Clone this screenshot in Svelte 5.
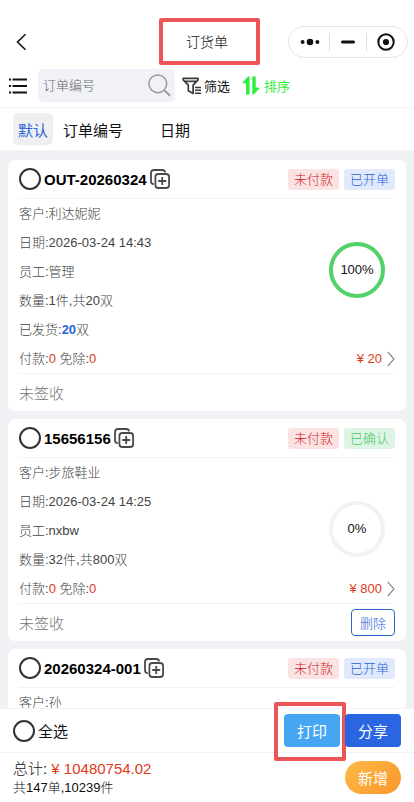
<script>
  const orders = [
    {
      no: 'OUT-20260324',
      status: '已开单',
      tone: 'blue',
      lines: ['客户:利达妮妮', '日期:2026-03-24 14:43', '员工:管理', '数量:1件,共20双'],
      shipped: 20,
      percent: 100,
      price: 20,
      removable: false
    },
    {
      no: '15656156',
      status: '已确认',
      tone: 'green',
      lines: ['客户:步旅鞋业', '日期:2026-03-24 14:25', '员工:nxbw', '数量:32件,共800双'],
      shipped: 0,
      percent: 0,
      price: 800,
      removable: true
    },
    {
      no: '20260324-001',
      status: '已开单',
      tone: 'blue',
      lines: ['客户:孙'],
      shipped: 0,
      percent: null,
      price: null,
      removable: false
    }
  ];
  const tabs = ['默认', '订单编号', '日期'];
  let active = $state('默认');
  let keyword = $state('');
  const ringLength = 2 * Math.PI * 26;
</script>

<div class="app">
  <header class="nav">
    <button class="icon-btn" aria-label="返回">
      <svg width="11" height="18" viewBox="0 0 11 18"><path d="M9.5 1.2 1.5 9l8 7.8" fill="none" stroke="#111" stroke-width="1.6" /></svg>
    </button>
    <h1 class="title">订货单<span class="mark"></span></h1>
    <div class="capsule">
      <button class="icon-btn" aria-label="更多">
        <svg width="20" height="8" viewBox="0 0 20 8" fill="#111"><circle cx="2.6" cy="4" r="2" /><circle cx="10" cy="4" r="3.3" /><circle cx="17.4" cy="4" r="2" /></svg>
      </button>
      <button class="icon-btn" aria-label="最小化">
        <svg width="14" height="4" viewBox="0 0 14 4"><rect y=".5" width="14" height="3" rx="1.5" fill="#111" /></svg>
      </button>
      <button class="icon-btn" aria-label="关闭">
        <svg width="18" height="18" viewBox="0 0 18 18"><circle cx="9" cy="9" r="7.7" fill="none" stroke="#111" stroke-width="2" /><circle cx="9" cy="9" r="3.1" fill="#111" /></svg>
      </button>
    </div>
  </header>

  <div class="tools">
    <button class="icon-btn" aria-label="菜单">
      <svg width="20" height="16" viewBox="0 0 20 16"><path d="M4.5 1.5H19M4.5 8H19M4.5 14.5H19" stroke="#111" stroke-width="1.9" /><path d="M1 1.5h2M1 8h2M1 14.5h2" stroke="#111" stroke-width="1.9" /></svg>
    </button>
    <label class="search">
      <input type="text" placeholder="订单编号" aria-label="订单编号" bind:value={keyword} />
      <svg width="23" height="23" viewBox="0 0 23 23" fill="none" stroke="#999"><circle cx="9.8" cy="9.8" r="8.9" stroke-width="1.5" /><path d="m16.4 16.4 5.6 5.4" stroke-width="2" /></svg>
    </label>
    <button class="tool">
      <svg width="20" height="18" viewBox="0 0 20 18" fill="none" stroke="#3a3a3c" stroke-width="1.7"><path d="M1.2 1.4h14.8v1.5l-4.9 5.3v8.3l-4.8-2.8V8.2L1.2 2.9zM3 4.4h11" stroke-linejoin="round" /><path d="M13 10.4h6M13 13.3h6M13 16.2h6" stroke-width="1.5" /></svg>
      筛选
    </button>
    <button class="tool sort">
      <svg width="18" height="19" viewBox="0 0 18 19" fill="#2cf03c"><path d="M7.6.5v18H4V7.4L.2 6.9 6 .5z" /><path d="M10.3.5h3.4v10.8l4.1.6-6 6.6h-1.5z" /></svg>
      排序
    </button>
  </div>

  <nav class="tabs">
    {#each tabs as tab}
      <button class="tab" class:active={active === tab} onclick={() => (active = tab)}>{tab}</button>
    {/each}
  </nav>

  <main class="list">
    {#each orders as order}
      <article class="card">
        <div class="card-head">
          <input class="check" type="checkbox" aria-label={order.no} />
          <h2>{order.no}</h2>
          <button class="icon-btn" aria-label="复制">
            <svg width="20" height="20" viewBox="0 0 20 20" fill="none" stroke="#4a4a4a" stroke-width="1.8"><path d="M3.8 15.2C1.9 15 1 14 1 12.2V4c0-2 1-3 3-3h8.2c1.7 0 2.7.8 3 2.4" /><rect x="5.4" y="5" width="13.7" height="14" rx="3" /><path d="M12.2 8v8M8.2 12h8" /></svg>
          </button>
          <span class="badge red">未付款</span>
          <span class="badge {order.tone}">{order.status}</span>
        </div>
        <div class="body">
          <div class="info">
            {#each order.lines as line}<p>{line}</p>{/each}
            {#if order.shipped}<p>已发货:<b>{order.shipped}</b>双</p>{/if}
          </div>
          {#if order.percent !== null}
            <div class="ring">
              <svg width="56" height="56" viewBox="0 0 56 56" fill="none" stroke-width="4">
                <circle cx="28" cy="28" r="26" stroke="#f1f2f5" />
                {#if order.percent > 0}
                  <circle cx="28" cy="28" r="26" stroke="#52d268" stroke-dasharray="{(ringLength * order.percent) / 100} {ringLength}" />
                {/if}
              </svg>
              <span>{order.percent}%</span>
            </div>
          {/if}
        </div>
        {#if order.price !== null}
          <div class="pay">
            <p>付款:<em>0</em> 免除:<em>0</em></p>
            <a href="#detail" aria-label="¥ {order.price}">
              ¥ {order.price}
              <svg width="8" height="16" viewBox="0 0 8 16"><path d="m.7.8 6.3 7.2-6.3 7.2" fill="none" stroke="#888" stroke-width="1.2" /></svg>
            </a>
          </div>
          <div class="card-foot">
            <span>未签收</span>
            {#if order.removable}<button class="delete">删除</button>{/if}
          </div>
        {/if}
      </article>
    {/each}
  </main>

  <footer>
    <div class="actions">
      <label><input class="check" type="checkbox" />全选</label>
      <button class="btn print">打印<span class="mark"></span></button>
      <button class="btn share">分享</button>
    </div>
    <div class="summary">
      <div>
        <p class="total">总计: <em>¥ 10480754.02</em></p>
        <p class="count">共147单,10239件</p>
      </div>
      <button class="btn add">新增</button>
    </div>
  </footer>
</div>

<style>
  .app {
    display: flex;
    flex-direction: column;
    height: 100vh;
    background: #fff;
    color: #111;
    font-family: 'Liberation Sans', 'Noto Sans CJK SC', sans-serif;
    font-size: 13px;
    font-weight: 300;
  }
  .app :is(button, input) {
    font: inherit;
    color: inherit;
    margin: 0;
    padding: 0;
    border: 0;
    background: none;
  }
  button { cursor: pointer; }
  svg { display: block; flex: none; }
  p, h1, h2 { margin: 0; }
  em { font-style: normal; color: #dd3a1b; }
  .icon-btn { display: flex; align-items: center; justify-content: center; }

  .nav {
    display: grid;
    grid-template-columns: 1fr auto 1fr;
    align-items: center;
    padding: 26px 6px 0;
  }
  .app .nav > .icon-btn { justify-self: start; padding-left: 10px; }
  .title { position: relative; font-size: 14px; font-weight: 300; line-height: 20px; }
  .mark { position: absolute; border: 4px solid #ec5558; border-radius: 2px; pointer-events: none; }
  .title .mark { inset: -14px -32px -13px -27px; }
  .capsule {
    justify-self: end;
    display: flex;
    box-sizing: border-box;
    width: 120px;
    height: 32px;
    padding: 0 3px;
    border: 1px solid #e4e4e6;
    border-radius: 16px;
    align-items: center;
  }
  .capsule .icon-btn { flex: 1; height: 18px; }
  .capsule .icon-btn + .icon-btn { border-left: 1px solid #dcdcde; }

  .tools {
    display: flex;
    align-items: center;
    padding: 11px 8px 5px;
    border-bottom: 1px solid #f3f4f6;
  }
  .search {
    display: flex;
    align-items: center;
    width: 137px;
    height: 33px;
    margin: 0 7px 0 10px;
    padding: 0 4px 0 5px;
    box-sizing: border-box;
    border-radius: 5px;
    background: #f0f2f7;
  }
  .search input { flex: 1; min-width: 0; outline: 0; }
  .search input::placeholder { color: #666; opacity: 1; }
  .tool { display: flex; align-items: center; gap: 2px; }
  .app .tool { font-weight: 400; }
  .app .sort { margin-left: 12px; gap: 4px; color: #2cf03c; }

  .tabs {
    display: flex;
    align-items: center;
    gap: 5px;
    height: 42px;
    padding-left: 13px;
    border-bottom: 1px solid #f6f7f9;
  }
  .app .tab { height: 32px; padding: 0 5px; border-radius: 5px; font-size: 15px; font-weight: 400; }
  .app .tab:last-child { margin-left: 22px; }
  .app .tab.active { background: #efefef; color: #2a62dc; }

  .list {
    flex: 1;
    min-height: 0;
    overflow: hidden;
    padding: 9px 8px 0;
    background: #eff1f5;
  }
  .card { margin-bottom: 8px; padding: 0 11px; border-radius: 7px; background: #fff; }
  .card-head { display: flex; align-items: center; height: 38px; border-bottom: 1px solid #f2f2f4; }
  .card-head h2 { margin: 0 3px; font-size: 15px; font-weight: 700; color: #000; }
  .app .check {
    appearance: none;
    flex: none;
    box-sizing: border-box;
    width: 22px;
    height: 22px;
    border: 2px solid #333;
    border-radius: 50%;
  }
  .app .check:checked { background: #2a62dc; }
  .badge { padding: 0 6px; border-radius: 3px; line-height: 21px; margin-left: 5px; }
  .badge.red { margin-left: auto; background: #fce3e3; color: #cf2026; }
  .badge.blue { background: #e0eafc; color: #2a62dc; }
  .badge.green { background: #def5e6; color: #45c95c; }

  .body { display: flex; justify-content: space-between; align-items: flex-start; color: #444; }
  .info p, .pay { line-height: 29px; }
  .info b { color: #2a62dc; font-weight: 700; }
  .ring { position: relative; margin: 43px 10px 0 0; }
  .ring svg { transform: rotate(-90deg); }
  .ring span {
    position: absolute;
    inset: 0;
    color: #111;
    line-height: 56px;
    text-align: center;
  }
  .pay { display: flex; justify-content: space-between; color: #444; border-bottom: 1px solid #f2f2f4; }
  .pay a { display: flex; align-items: center; gap: 5px; color: #dd3a1b; text-decoration: none; }
  .card-foot {
    display: flex;
    align-items: center;
    justify-content: space-between;
    height: 37px;
    color: #777;
    font-size: 15px;
  }
  .app .delete {
    width: 44px;
    height: 27px;
    border: 1px solid #2a66cc;
    border-radius: 4px;
    color: #2a62dc;
    font-size: 13px;
  }

  footer { background: #fff; }
  .actions, .summary { display: flex; align-items: center; padding: 0 13px; border-top: 1px solid #f2f2f4; }
  .actions { height: 43px; gap: 5px; }
  .actions label { display: flex; align-items: center; gap: 3px; margin-right: auto; font-size: 15px; font-weight: 400; }
  .summary { height: 49px; justify-content: space-between; }
  .total { font-size: 15px; line-height: 20px; }
  .count { line-height: 18px; }
  .app .btn { position: relative; width: 56px; height: 33px; border-radius: 4px; color: #fff; font-size: 15px; font-weight: 400; }
  .app .print { background: #46a6f3; }
  .print .mark { inset: -12px -6px -14px -10px; }
  .app .share { background: #2a66e2; }
  .app .add { border-radius: 17px; background: linear-gradient(135deg, #ffb948, #f9972a); }
</style>
